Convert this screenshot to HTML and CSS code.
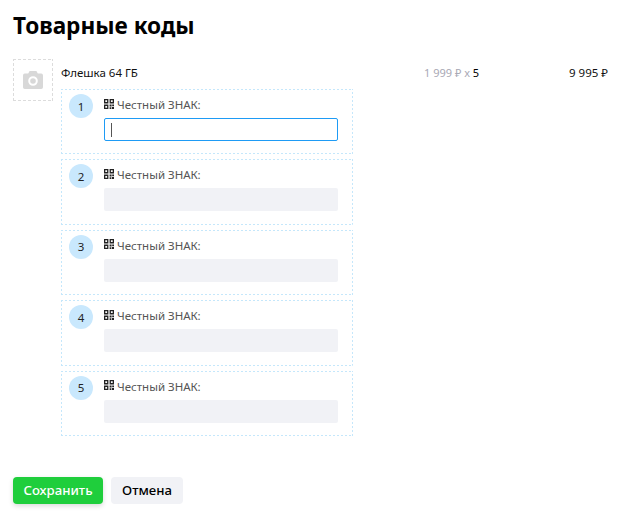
FILE: index.html
```html
<!DOCTYPE html>
<html lang="ru">
<head>
<meta charset="utf-8">
<title>Товарные коды</title>
<link rel="stylesheet" href="styles.css">
</head>
<body>
<h1 class="title">Товарные коды</h1>
<div class="item">
  <div class="thumb">
    <svg class="camera" viewBox="0 0 20 18" width="20" height="18"><path fill-rule="evenodd" d="M6.600 0h6.800l1.400 2.600h3.400A1.800 1.800 0 0 1 20 4.400v11.800a1.800 1.800 0 0 1-1.800 1.800H1.800A1.800 1.800 0 0 1 0 16.200V4.400a1.800 1.800 0 0 1 1.800-1.800h3.400zM10 5.200a4.800 4.800 0 1 0 0 9.600 4.800 4.800 0 0 0 0-9.600zM10 7.200a2.800 2.800 0 1 1 0 5.600 2.800 2.800 0 0 1 0-5.600z"/></svg>
  </div>
  <div class="details">
    <div class="product">
      <span class="name">Флешка 64 ГБ</span>
      <span class="price">1 999 ₽ x <b class="qty">5</b></span>
      <span class="total">9 995 ₽</span>
    </div>
    <div class="codes">
      <section class="code">
        <span class="num">1</span>
        <div class="field">
          <div class="label"><svg class="qr" viewBox="0 0 10 10" width="10" height="10"><use href="#qr"/></svg>Честный ЗНАК:</div>
          <div class="input active"><span class="caret"></span></div>
        </div>
      </section>
      <section class="code">
        <span class="num">2</span>
        <div class="field">
          <div class="label"><svg class="qr" viewBox="0 0 10 10" width="10" height="10"><use href="#qr"/></svg>Честный ЗНАК:</div>
          <div class="input"></div>
        </div>
      </section>
      <section class="code">
        <span class="num">3</span>
        <div class="field">
          <div class="label"><svg class="qr" viewBox="0 0 10 10" width="10" height="10"><use href="#qr"/></svg>Честный ЗНАК:</div>
          <div class="input"></div>
        </div>
      </section>
      <section class="code">
        <span class="num">4</span>
        <div class="field">
          <div class="label"><svg class="qr" viewBox="0 0 10 10" width="10" height="10"><use href="#qr"/></svg>Честный ЗНАК:</div>
          <div class="input"></div>
        </div>
      </section>
      <section class="code">
        <span class="num">5</span>
        <div class="field">
          <div class="label"><svg class="qr" viewBox="0 0 10 10" width="10" height="10"><use href="#qr"/></svg>Честный ЗНАК:</div>
          <div class="input"></div>
        </div>
      </section>
    </div>
  </div>
</div>
<div class="actions">
  <button class="btn save">Сохранить</button>
  <button class="btn cancel">Отмена</button>
</div>
<svg class="defs" width="0" height="0"><defs><g id="qr"><path fill-rule="evenodd" d="M0 0h4.400v4.400H0zM1.300 1.300v1.800h1.800V1.300zM5.600 0H10v4.400H5.600zM6.900 1.300v1.800h1.800V1.300zM0 5.600h4.400V10H0zM1.300 6.900v1.800h1.800V6.900z"/><path d="M5.600 5.600h2v2h-2zM8.200 5.600H10v1.600H8.200zM5.600 8.200h1.800V10H5.600zM8 8h2v2H8z"/></g></defs></svg>
</body>
</html>
```
FILE: styles.css
```css
* { box-sizing: border-box; }
html, body { margin: 0; padding: 0; }
body {
  width: 622px;
  height: 519px;
  overflow: hidden;
  padding: 13px 13px 0;
  background: #fff;
  color: #000;
  font-family: "Noto Sans", "Open Sans", sans-serif;
}
.title {
  margin: 0 0 18px;
  font-size: 22.600px;
  line-height: 28px;
  font-weight: 700;
  position: relative;
  top: -1px;
}
.item { display: flex; gap: 8px; }
.thumb {
  width: 40px;
  height: 42px;
  flex: none;
  display: flex;
  align-items: center;
  justify-content: center;
  background:
    repeating-linear-gradient(90deg, #dcdcdc 0 3px, transparent 3px 5px) top / 100% 1px no-repeat,
    repeating-linear-gradient(90deg, #dcdcdc 0 3px, transparent 3px 5px) bottom / 100% 1px no-repeat,
    repeating-linear-gradient(0deg, #dcdcdc 0 3px, transparent 3px 5px) left / 1px 100% no-repeat,
    repeating-linear-gradient(0deg, #dcdcdc 0 3px, transparent 3px 5px) right / 1px 100% no-repeat;
}
.camera { fill: #d8d8d8; }
.details { width: 548px; }
.product {
  display: flex;
  align-items: center;
  height: 30px;
  font-size: 11.500px;
  color: #111;
  padding-bottom: 4px;
}
.name { width: 363px; }
.price { color: #a8a8b4; width: 124px; font-size: 11px; }
.qty { font-weight: 400; color: #000; }
.total { flex: 1; text-align: right; padding-right: 1px; }
.codes { display: flex; flex-direction: column; gap: 5px; width: 292px; }
.code {
  display: flex;
  gap: 11px;
  height: 65.400px;
  padding: 5px 15px 0 8px;
  background:
    repeating-linear-gradient(90deg, #c5e7fb 0 2px, transparent 2px 4px) top / 100% 1px no-repeat,
    repeating-linear-gradient(90deg, #c5e7fb 0 2px, transparent 2px 4px) bottom / 100% 1px no-repeat,
    repeating-linear-gradient(0deg, #c5e7fb 0 2px, transparent 2px 4px) left / 1px 100% no-repeat,
    repeating-linear-gradient(0deg, #c5e7fb 0 2px, transparent 2px 4px) right / 1px 100% no-repeat;
}
.num {
  width: 24px;
  height: 24px;
  flex: none;
  border-radius: 50%;
  background: #c9e8fd;
  display: flex;
  align-items: center;
  justify-content: center;
  font-size: 11.500px;
  color: #222;
}
.field { flex: 1; }
.label {
  display: flex;
  align-items: center;
  gap: 3px;
  height: 24px;
  padding-bottom: 3px;
  font-size: 11.500px;
  color: #555;
}
.qr { fill: #222; margin-top: -2px; }
.input {
  height: 23px;
  border-radius: 2px;
  background: #f1f2f6;
  display: flex;
  align-items: center;
  padding-left: 6px;
}
.input.active { background: #fff; border: 1px solid #1e9bf5; }
.caret { width: 1px; height: 14px; background: #555; }
.actions { display: flex; gap: 8px; margin-top: 41px; }
.btn {
  height: 27px;
  border: 0;
  border-radius: 4px;
  font-family: "Noto Sans", sans-serif;
  font-size: 13.200px;
  font-weight: 500;
  padding: 0;
}
.save { width: 90px; background: #1fce3c; color: #fff; box-shadow: 0 2px 5px rgba(0,0,0,.15); }
.cancel { width: 72px; background: #f1f2f6; color: #000; }
.defs { position: absolute; }
```
